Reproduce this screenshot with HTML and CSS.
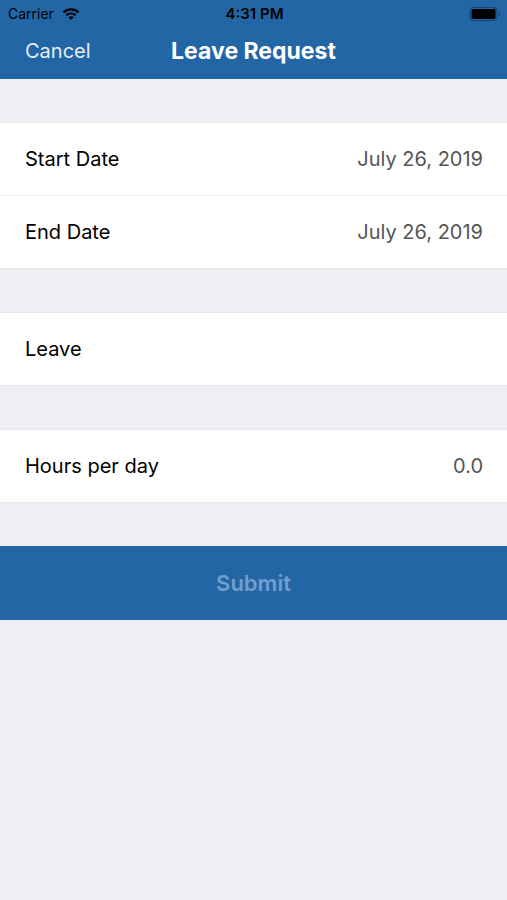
FILE: index.html
```html
<!DOCTYPE html>
<html lang="en">
<head>
<meta charset="utf-8">
<meta name="viewport" content="width=device-width, initial-scale=1">
<title>Leave Request</title>
<link rel="stylesheet" href="styles.css">
</head>
<body>
<header class="header">
  <div class="status">
    <div class="carrier">
      <span>Carrier</span>
      <svg class="wifi" viewBox="0 0 18 14" aria-hidden="true">
        <path d="M1.5 5.4C5.8 1.4 12.2 1.4 16.5 5.4" fill="none" stroke="#000" stroke-width="2.3"/>
        <path d="M4.300 8.300C7 5.900 11 5.900 13.700 8.300" fill="none" stroke="#000" stroke-width="2.2"/>
        <path d="M6.300 10.300C7.800 8.900 10.200 8.900 11.700 10.300L9 13Z"/>
      </svg>
    </div>
    <span class="time">4:31 PM</span>
    <svg class="battery" viewBox="0 0 32 14" aria-hidden="true">
      <rect x="1" y="0.5" width="27" height="13" rx="3.5" fill="none" stroke="#000" stroke-opacity="0.35"/>
      <rect x="2.500" y="2" width="24" height="10" rx="1.5"/>
      <path d="M30 5C31.800 5.500 31.800 8.500 30 9Z" opacity="0.4"/>
    </svg>
  </div>
  <nav class="navbar">
    <button class="cancel" type="button">Cancel</button>
    <h1 class="title">Leave Request</h1>
  </nav>
</header>
<form class="form">
  <div class="group">
    <div class="row"><label for="start">Start Date</label><input id="start" type="text" value="July 26, 2019"></div>
    <div class="row"><label for="end">End Date</label><input id="end" type="text" value="July 26, 2019"></div>
  </div>
  <div class="group">
    <div class="row"><label for="leave">Leave</label><input id="leave" type="text"></div>
  </div>
  <div class="group">
    <div class="row"><label for="hours">Hours per day</label><input id="hours" type="text" value="0.0"></div>
  </div>
  <button class="submit" type="submit" disabled>Submit</button>
</form>
</body>
</html>
```
FILE: styles.css
```css
* {
  box-sizing: border-box;
}

body {
  margin: 0;
  min-height: 100vh;
  background: #eeeef3;
  color: #000;
  font-family: Inter, "Liberation Sans", sans-serif;
  font-size: 20px;
  line-height: 28px;
}

button,
input {
  margin: 0;
  padding: 0;
  border: 0;
  background: none;
  font: inherit;
}

.header {
  background: #2266a6;
}

.status {
  display: grid;
  grid-template-columns: 1fr auto 1fr;
  align-items: center;
  height: 27px;
  padding: 0 6px 0 8px;
  font-size: 14px;
  line-height: 20px;
}

.carrier {
  display: flex;
  align-items: center;
  gap: 8px;
}

.wifi {
  width: 18px;
  height: 14px;
}

.time {
  font-size: 15px;
  font-weight: 600;
}

.battery {
  justify-self: end;
  width: 32px;
  height: 14px;
}

.navbar {
  display: grid;
  grid-template-columns: 1fr auto 1fr;
  align-items: center;
  padding: 10px 25px 14px;
  color: #fff;
}

.cancel {
  justify-self: start;
  color: #e4eef7;
}

.title {
  margin: 0;
  font-size: 23px;
  font-weight: 700;
}

.form {
  display: flex;
  flex-direction: column;
  gap: 43px;
  padding-top: 43px;
}

.group {
  border-top: 1px solid #e6e6ea;
  border-bottom: 1px solid #e6e6ea;
  background: #fff;
}

.row {
  display: flex;
  align-items: center;
  gap: 16px;
  min-height: 72px;
  padding: 0 24px 0 25px;
}

.row + .row {
  min-height: 73px;
  border-top: 1px solid #ededf0;
}

.row label {
  flex: none;
}

.row input {
  flex: 1;
  min-width: 0;
  color: #555;
  text-align: right;
}

.submit {
  min-height: 74px;
  background: #2266a6;
  color: #6f9fce;
  font-size: 22px;
  font-weight: 600;
}
```
